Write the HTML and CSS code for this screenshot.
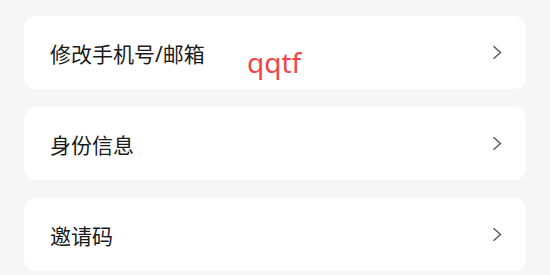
FILE: index.html
```html
<!DOCTYPE html>
<html lang="zh-CN">
<head>
    <meta charset="UTF-8">
    <meta name="viewport" content="width=device-width, initial-scale=1.0">
    <title>账号设置</title>
    <link rel="stylesheet" href="styles.css">
</head>
<body>
    <div class="menu">
        <div class="menu-item">
            <span class="menu-label">修改手机号/邮箱</span>
            <svg class="chevron" width="11" height="15" viewBox="0 0 11 15"><path d="M1.5 1.2 L8.5 7.5 L1.5 13.8" fill="none" stroke="#5c5c5c" stroke-width="1.5"/></svg>
        </div>
        <div class="menu-item">
            <span class="menu-label">身份信息</span>
            <svg class="chevron" width="11" height="15" viewBox="0 0 11 15"><path d="M1.5 1.2 L8.5 7.5 L1.5 13.8" fill="none" stroke="#5c5c5c" stroke-width="1.5"/></svg>
        </div>
        <div class="menu-item">
            <span class="menu-label">邀请码</span>
            <svg class="chevron" width="11" height="15" viewBox="0 0 11 15"><path d="M1.5 1.2 L8.5 7.5 L1.5 13.8" fill="none" stroke="#5c5c5c" stroke-width="1.5"/></svg>
        </div>
    </div>

    <!-- overlay tag -->
    <span class="tag">qqtf</span>
</body>
</html>
```

FILE: styles.css
```css
body {
    margin: 0;
    background: #f6f6f6;
    font-family: "Noto Sans", "Noto Sans CJK SC", sans-serif;
    color: #1a1a1a;
}
.menu {
    display: flex;
    flex-direction: column;
    gap: 18px;
    padding: 16px 24px 0 24px;
}
.menu-item {
    display: flex;
    align-items: center;
    justify-content: space-between;
    height: 73px;
    padding: 0 23px 0 26px;
    background: #fff;
    border-radius: 12px;
}
.menu-label {
    font-size: 21px;
}
.chevron {
    display: block;
}
.tag {
    position: absolute;
    left: 247px;
    top: 43px;
    font-family: "Noto Sans", sans-serif;
    font-size: 28px;
    color: #f04646;
}
```
